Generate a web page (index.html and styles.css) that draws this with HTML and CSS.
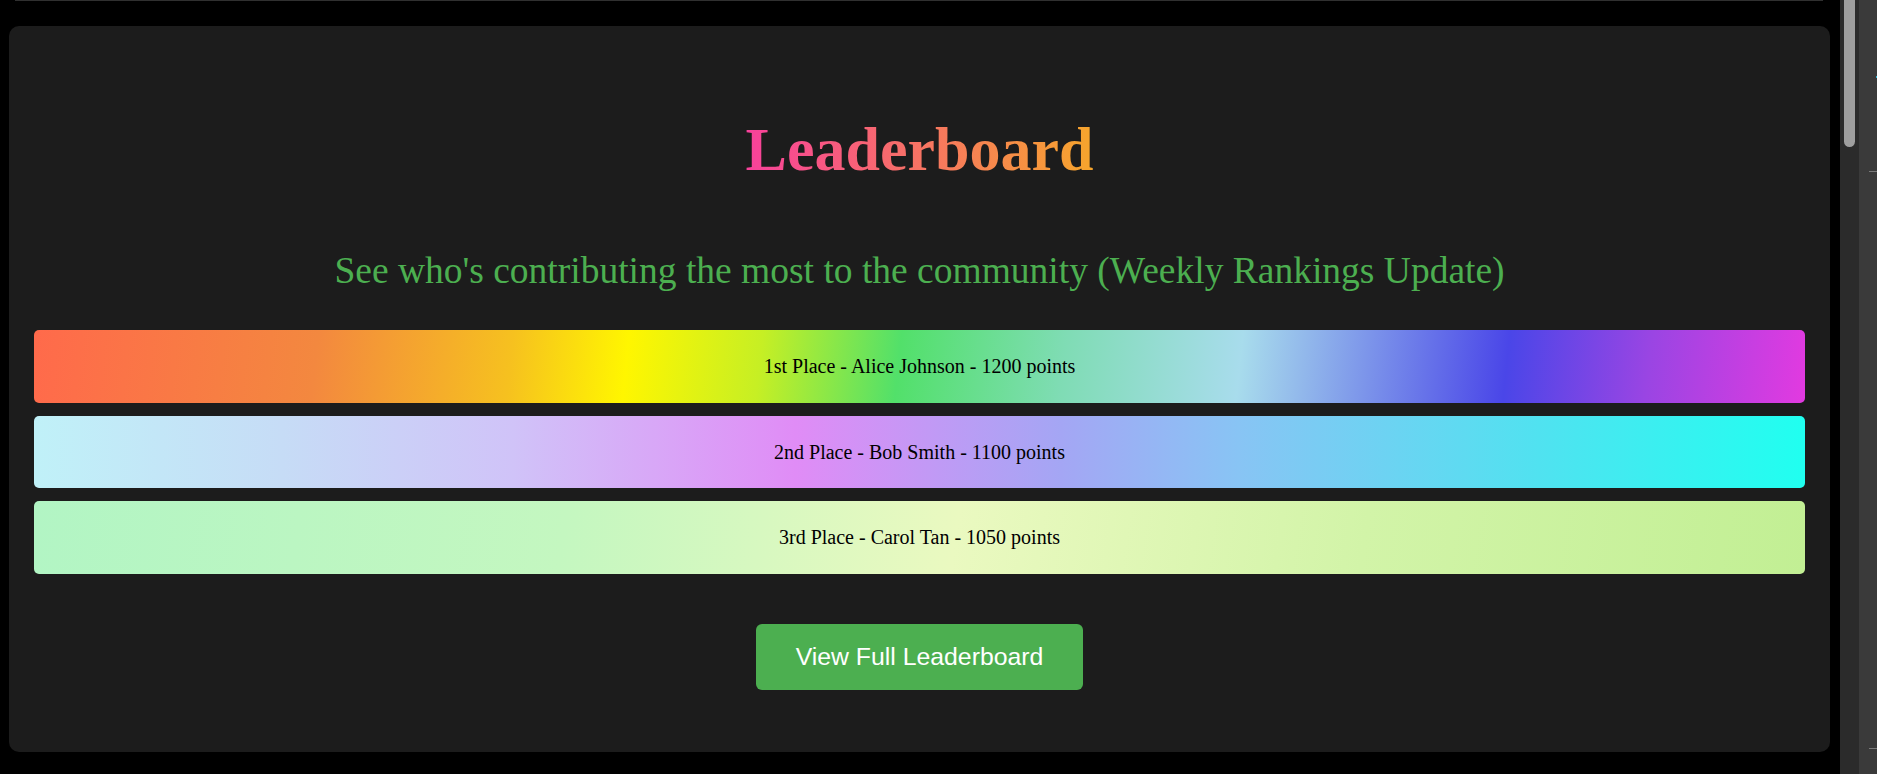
FILE: index.html
```html
<!DOCTYPE html>
<html lang="en">
<head>
<meta charset="utf-8">
<title>Leaderboard</title>
<link rel="stylesheet" href="styles.css">
</head>
<body>
<div class="screen">
  <main class="viewport">
    <div class="topline"></div>
    <section class="card">
      <h1 class="title">Leaderboard</h1>
      <p class="subtitle">See who's contributing the most to the community (Weekly Rankings Update)</p>
      <ol class="ranks">
        <li class="rank rank-1">1st Place - Alice Johnson - 1200 points</li>
        <li class="rank rank-2">2nd Place - Bob Smith - 1100 points</li>
        <li class="rank rank-3">3rd Place - Carol Tan - 1050 points</li>
      </ol>
      <button class="cta" type="button">View Full Leaderboard</button>
    </section>
  </main>
  <div class="scrollbar"><div class="thumb"></div></div>
  <aside class="side">
    <div class="side-dot"></div>
    <div class="side-line side-line-1"></div>
    <div class="side-line side-line-2"></div>
  </aside>
</div>
</body>
</html>
```
FILE: styles.css
```css
html, body {
  margin: 0;
  padding: 0;
  background: #000;
}

.screen {
  display: flex;
  width: 1877px;
  height: 774px;
  overflow: hidden;
  background: #000;
}

.viewport {
  width: 1840px;
  flex: 0 0 1840px;
  display: flex;
  flex-direction: column;
}

.topline {
  height: 1px;
  margin: 0 17px 0 15px;
  background: #303030;
}

.card {
  margin: 25px 10px 0 9px;
  height: 726px;
  box-sizing: border-box;
  background: #1c1c1c;
  border-radius: 10px;
  padding: 0 25px;
  display: flex;
  flex-direction: column;
  align-items: center;
}

.title {
  margin: 88px 0 0;
  font-family: "Liberation Serif", "Times New Roman", serif;
  font-weight: bold;
  font-size: 62px;
  line-height: 71.3px;
  background: linear-gradient(90deg, #f8419b 0%, #f6a52c 100%);
  -webkit-background-clip: text;
  background-clip: text;
  color: transparent;
  -webkit-text-fill-color: transparent;
}

.subtitle {
  margin: 63.6px 0 0;
  font-family: "Liberation Serif", "Times New Roman", serif;
  font-size: 37.5px;
  line-height: 44.1px;
  color: #4caf50;
  text-align: center;
}

.ranks {
  list-style: none;
  margin: 37px 0 0;
  padding: 0;
  align-self: stretch;
  display: flex;
  flex-direction: column;
  gap: 12.8px;
}

.rank {
  height: 72.8px;
  box-sizing: border-box;
  padding: 25.2px 0;
  border-radius: 5px;
  font-family: "Liberation Serif", "Times New Roman", serif;
  font-size: 20px;
  line-height: 22px;
  color: #000;
  text-align: center;
}

.rank-1 {
  background: linear-gradient(96deg,
    #ff6a4b 0%,
    #f3883f 16%,
    #f6c11f 27%,
    #fff600 33.5%,
    #c6ef24 41%,
    #52e06a 48.8%,
    #7fdcb4 58%,
    #a8dcec 68%,
    #7d96ea 75%,
    #4a46e8 83%,
    #9a45e3 91%,
    #e23ae0 100%);
}

.rank-2 {
  background: linear-gradient(90deg,
    #c0f1f8 0%,
    #c6dcf6 14%,
    #d0c3f8 27%,
    #e08cf6 43%,
    #a4a6f4 58%,
    #88c4f4 68%,
    #50e2f0 85%,
    #20fff0 100%);
}

.rank-3 {
  background: linear-gradient(98deg,
    #b2f5c4 0%,
    #c4f7c0 30%,
    #eaf9c0 52%,
    #d2f4a8 75%,
    #c2ef94 100%);
}

.cta {
  margin-top: 50px;
  height: 65.7px;
  padding: 0 40px;
  border: none;
  border-radius: 6px;
  background: #4caf50;
  color: #fff;
  font-family: "Liberation Sans", Arial, sans-serif;
  font-size: 24.8px;
  line-height: 28px;
  cursor: pointer;
}

.scrollbar {
  flex: 0 0 19px;
  background: #2b2b2b;
  display: flex;
  justify-content: center;
}

.thumb {
  width: 11px;
  height: 147px;
  background: #9e9e9e;
  border-radius: 0 0 6px 6px;
}

.side {
  flex: 1 1 auto;
  background: #3a3a3a;
  display: flex;
  flex-direction: column;
  align-items: flex-end;
}

.side-dot {
  margin-top: 76px;
  width: 1px;
  height: 2px;
  background: #2fb6d6;
}

.side-line {
  width: 8px;
  height: 1px;
  background: #7a7a7a;
}

.side-line-1 {
  margin-top: 93px;
}

.side-line-2 {
  margin-top: 576px;
}
```
